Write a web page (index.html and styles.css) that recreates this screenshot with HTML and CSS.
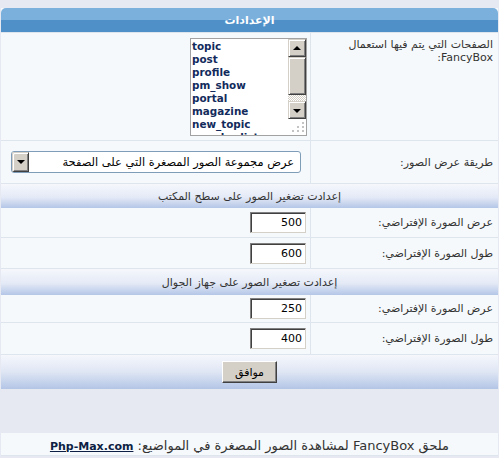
FILE: index.html
```html
<!DOCTYPE html>
<html lang="ar" dir="rtl">
<head>
    <meta charset="UTF-8">
    <title>الإعدادات - FancyBox</title>
    <link rel="stylesheet" href="styles.css">
</head>
<body>

<form action="#" method="post">
<table class="forumline">
    <colgroup>
        <col class="col-label">
        <col class="col-field">
    </colgroup>
    <tr>
        <th colspan="2" class="thHead">الإعدادات</th>
    </tr>
    <tr>
        <td class="label top">الصفحات التي يتم فيها استعمال FancyBox:</td>
        <td class="field field-list">
            <!-- قائمة الصفحات مع شريط تمرير مرسوم -->
            <div class="listbox">
                <div class="items">
                    <div>topic</div>
                    <div>post</div>
                    <div>profile</div>
                    <div>pm_show</div>
                    <div>portal</div>
                    <div>magazine</div>
                    <div>new_topic</div>
                    <div>memberlist</div>
                </div>
                <div class="vscroll">
                    <span class="sb-btn up"></span>
                    <span class="sb-thumb"></span>
                    <span class="sb-track"></span>
                    <span class="sb-btn down"></span>
                    <span class="grip">
                        <svg width="14" height="12" viewBox="0 0 14 12">
                            <rect x="10" y="1" width="2" height="2" fill="#c4c4c4"/>
                            <rect x="5" y="5" width="2" height="2" fill="#c4c4c4"/>
                            <rect x="10" y="5" width="2" height="2" fill="#c4c4c4"/>
                            <rect x="0" y="9" width="2" height="2" fill="#c4c4c4"/>
                            <rect x="5" y="9" width="2" height="2" fill="#c4c4c4"/>
                            <rect x="10" y="9" width="2" height="2" fill="#c4c4c4"/>
                        </svg>
                    </span>
                </div>
            </div>
        </td>
    </tr>
    <tr>
        <td class="label">طريقة عرض الصور:</td>
        <td class="field field-combo">
            <div class="combo">
                <select class="cmb" name="display_mode">
                    <option>عرض مجموعة الصور المصغرة التي على الصفحة</option>
                </select>
                <span class="cmb-btn"></span>
            </div>
        </td>
    </tr>
    <tr>
        <td colspan="2" class="catHead">إعدادت تضغير الصور على سطح المكتب</td>
    </tr>
    <tr class="r29">
        <td class="label">عرض الصورة الإفتراضي:</td>
        <td class="field"><input class="post" type="text" name="pc_width" value="500"></td>
    </tr>
    <tr class="r30">
        <td class="label">طول الصورة الإفتراضي:</td>
        <td class="field"><input class="post" type="text" name="pc_height" value="600"></td>
    </tr>
    <tr>
        <td colspan="2" class="catHead tall">إعدادت تصغير الصور على جهاز الجوال</td>
    </tr>
    <tr class="r28">
        <td class="label">عرض الصورة الإفتراضي:</td>
        <td class="field"><input class="post" type="text" name="mob_width" value="250"></td>
    </tr>
    <tr class="r31">
        <td class="label">طول الصورة الإفتراضي:</td>
        <td class="field"><input class="post" type="text" name="mob_height" value="400"></td>
    </tr>
    <tr>
        <td colspan="2" class="catBottom"><input class="mainoption" type="submit" value="موافق"></td>
    </tr>
</table>
</form>

<div class="copyright">
    ملحق FancyBox لمشاهدة الصور المصغرة في المواضيع: <a href="#">Php-Max.com</a>
</div>

</body>
</html>
```

FILE: styles.css
```css
body {
    margin: 8px 1px 0;
    background: #e6e9f2;
    font-family: "DejaVu Sans", Verdana, sans-serif;
    font-size: 11px;
    color: #333;
}
form {
    margin: 0;
}
.forumline {
    width: 100%;
    table-layout: fixed;
    border-collapse: separate;
    border-spacing: 0;
    background: #f6f9fb;
}
.col-label {
    width: 188px;
}
.forumline td {
    padding: 0;
    box-sizing: border-box;
    border-bottom: 1px solid #dfe5ed;
}
th.thHead {
    height: 24px;
    padding: 0;
    background: linear-gradient(#7bb0dd 50%, #4f90c9 50%);
    color: #fff;
    font-size: 11px;
    font-weight: bold;
    border-radius: 5px 5px 0 0;
    border-bottom: 1px solid #dfe5ed;
}
td.label {
    padding: 0 5px 0 3px;
    border-left: 1px solid #dfe5ed;
    line-height: 13px;
}
td.label.top {
    vertical-align: top;
    padding-top: 5px;
}
td.field {
    padding-right: 4px;
}
td.field-list {
    height: 108px;
    padding-right: 3px;
}
td.field-combo {
    height: 43px;
    padding-right: 9px;
}
tr.r29 td { height: 30px; }
tr.r30 td { height: 31px; }
tr.r28 td { height: 28px; }
tr.r31 td { height: 32px; }

/* list box */
.listbox {
    display: inline-flex;
    direction: ltr;
    vertical-align: middle;
    width: 117px;
    height: 98px;
    box-sizing: border-box;
    border: 1px solid #a2a2a2;
    background: #fff;
}
.items {
    flex: 1;
    overflow: hidden;
    padding: 1px 0 0 1px;
    font-size: 10.4px;
    font-weight: bold;
    line-height: 13px;
    color: #122b5c;
    text-align: left;
}
.vscroll {
    width: 18px;
    display: flex;
    flex-direction: column;
}
.sb-btn, .sb-thumb {
    display: block;
    box-sizing: border-box;
    background: #d4d0c8;
    border: 1px solid;
    border-color: #d4d0c8 #404040 #404040 #d4d0c8;
    box-shadow: inset 1px 1px #fff, inset -1px -1px #808080;
    position: relative;
}
.sb-btn {
    height: 18px;
}
.sb-thumb {
    height: 38px;
}
.sb-btn::after {
    content: "";
    position: absolute;
    left: 4px;
    top: 6px;
    border-left: 4px solid transparent;
    border-right: 4px solid transparent;
}
.sb-btn.up::after {
    border-bottom: 4px solid #000;
}
.sb-btn.down::after {
    top: 7px;
    border-top: 4px solid #000;
}
.sb-track {
    display: block;
    height: 6px;
    background: repeating-conic-gradient(#d4d0c8 0 25%, #fff 0 50%) 0 0 / 2px 2px;
}
.grip {
    flex: 1;
    display: flex;
    align-items: flex-end;
    justify-content: flex-end;
    padding-bottom: 2px;
}
.grip svg {
    display: block;
}

/* drop-down */
.combo {
    position: relative;
    display: inline-block;
    vertical-align: middle;
}
.cmb {
    -webkit-appearance: none;
    appearance: none;
    display: block;
    width: 290px;
    height: 22px;
    margin: 0;
    padding: 0 6px 0 20px;
    border: 1px solid #7f9db9;
    border-radius: 3px;
    background: #fff;
    font-family: "DejaVu Sans", Verdana, sans-serif;
    font-size: 11.4px;
    color: #000;
    direction: rtl;
}
.cmb-btn {
    position: absolute;
    left: 1px;
    top: 1px;
    width: 17px;
    height: 20px;
    box-sizing: border-box;
    background: #d4d0c8;
    border: 1px solid;
    border-color: #d4d0c8 #404040 #404040 #d4d0c8;
    box-shadow: inset 1px 1px #fff, inset -1px -1px #808080;
    border-radius: 2px 0 0 2px;
    pointer-events: none;
}
.cmb-btn::after {
    content: "";
    position: absolute;
    left: 4px;
    top: 7px;
    border-left: 4px solid transparent;
    border-right: 4px solid transparent;
    border-top: 4px solid #000;
}

/* text inputs */
.post {
    width: 56px;
    height: 21px;
    box-sizing: border-box;
    margin: 0;
    padding: 0 3px 0 2px;
    border: 1px solid;
    border-color: #808080 #d4d0c8 #d4d0c8 #808080;
    box-shadow: inset 1px 1px #404040;
    background: #fff;
    font-family: "DejaVu Sans", Verdana, sans-serif;
    font-size: 11px;
    color: #000;
    text-align: right;
    vertical-align: middle;
}

td.catHead {
    height: 24px;
    background: linear-gradient(#f5f7fc, #e4eaf6 55%, #b4c6e7);
    text-align: center;
    border-bottom: 0;
}
td.catHead.tall {
    height: 26px;
}
td.catBottom {
    height: 34px;
    background: linear-gradient(#f5f7fc, #dfe6f4 50%, #b3c5e6);
    text-align: center;
    border-bottom: 0;
}
.mainoption {
    width: 55px;
    height: 22px;
    margin: 0;
    padding: 0;
    background: #d4d0c8;
    border: 1px solid;
    border-color: #fff #404040 #404040 #fff;
    box-shadow: inset -1px -1px #808080;
    font-family: "DejaVu Sans", Verdana, sans-serif;
    font-size: 11px;
    color: #000;
    vertical-align: middle;
}

.copyright {
    margin-top: 44px;
    height: 22px;
    line-height: 26px;
    background: #f6f9fb;
    border-bottom: 1px solid #dfe5ed;
    text-align: center;
    font-size: 13px;
    color: #333;
}
.copyright a {
    color: #0d1f44;
    font-size: 11px;
    font-weight: bold;
}
```
